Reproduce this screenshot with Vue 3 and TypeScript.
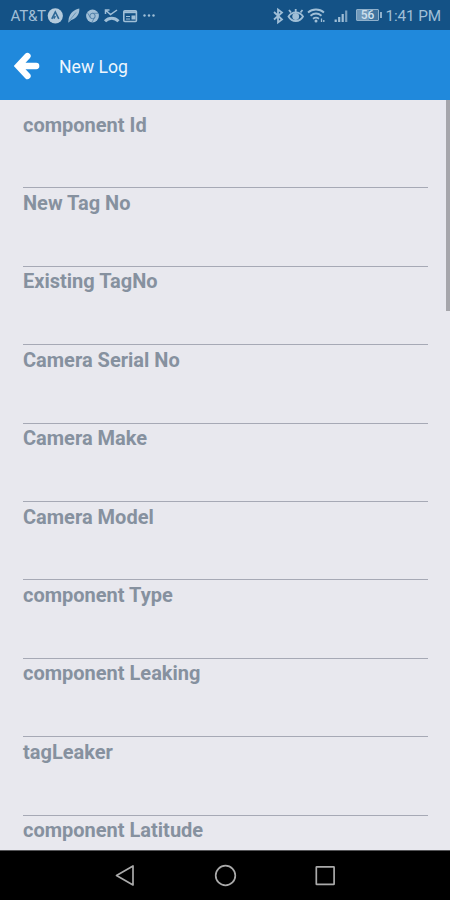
<script setup lang="ts">
import { ref } from 'vue'

const carrier = 'AT&T'
const time = '1:41 PM'
const battery = 56
const fields = ref<string[]>([
  'component Id',
  'New Tag No',
  'Existing TagNo',
  'Camera Serial No',
  'Camera Make',
  'Camera Model',
  'component Type',
  'component Leaking',
  'tagLeaker',
  'component Latitude',
])
</script>

<template>
  <div class="phone">
    <div class="status">
      <span class="carrier">{{ carrier }}</span>
      <svg class="notifications" width="110" height="30" viewBox="0 0 110 30" fill="none" stroke="#a0bfd7" stroke-width="1.6">
        <circle cx="8.3" cy="15.8" r="7.6" fill="#b4cbdd" stroke="none" />
        <path d="M4.800 18.800 8.300 12l3.500 6.800M6.800 18.600 8.300 16" stroke="#2f6896" />
        <path d="M21.200 22.800 21.800 18c1.500-5 5-8.500 10.500-9.500 .5 5-2.500 10-8 11.500z" fill="#a0bfd7" stroke="none" />
        <path d="M22.500 20.500 29 12.500" stroke="#4f82aa" stroke-width=".7" />
        <circle cx="45.500" cy="16" r="6.400" fill="#a0bfd7" stroke="none" />
        <circle cx="45.500" cy="16" r="2.700" stroke="#4f7fa8" stroke-width="1" />
        <path d="M45.500 13.300h5.500M43.200 17.400l-2.700-4.600M47.800 17.400l-2.800 4.700" stroke="#4f7fa8" stroke-width=".8" />
        <path d="M59 10.500l4.500 4L70 10M58.500 14v-4h4" stroke-width="1.500" />
        <path d="M58 21.300c4-4 9.500-4 13.500 0" stroke-width="3" />
        <rect x="76.800" y="10.700" width="12.600" height="10.800" rx="1" />
        <path d="M76.800 12.200h12.600" stroke-width="2" />
        <path d="M79 16.500h4M79 19h4" stroke-width="1" />
        <path d="M84.500 17.500h4" stroke-width="4" />
        <g fill="#a0bfd7" stroke="none"><circle cx="97.500" cy="15.500" r="1.200" /><circle cx="102" cy="15.500" r="1.200" /><circle cx="106.500" cy="15.500" r="1.200" /></g>
      </svg>
      <svg class="system" width="82" height="30" viewBox="0 0 82 30" fill="none" stroke="#a0bfd7" stroke-width="1.800">
        <path d="M1 12l8 7.500L5 22.500V9.500l4 3-8 7" />
        <path d="M15.500 16.500c3.500-5.500 11-5.500 14.500 0-3.500 6-11 6-14.500 0z" />
        <circle cx="22.700" cy="16.500" r="3.400" fill="#a0bfd7" stroke="none" />
        <path d="M22.700 12V9M18 12.500 16 10M27.500 12.500l2-2.500" />
        <path d="M35 12.500c4.500-4 11.500-4 16 0M37.500 15.700c3.500-2.800 7.500-2.800 11 0M40 18.800c2-1.600 4-1.600 6 0" />
        <circle cx="43" cy="21" r="1.500" fill="#a0bfd7" stroke="none" />
        <path d="M48.500 18.500v3.500M50.800 20v2" stroke-width="1.300" />
        <path d="M62.700 22v-2.500M66.200 22v-5M69.700 22v-8" stroke-width="2.200" />
        <path d="M73.200 22V10.500" stroke-width="2.200" stroke="#7ba1c0" />
      </svg>
      <span class="battery">{{ battery }}</span>
      <span class="time">{{ time }}</span>
    </div>

    <header class="header">
      <svg class="back" width="26" height="28" viewBox="0 0 26 28" fill="none" stroke="#fff">
        <path d="M13.500 4 4 14l9.500 10M5 14h17.200" stroke-width="6.300" stroke-linecap="round" stroke-linejoin="miter" />
      </svg>
      <h1 class="title">New Log</h1>
    </header>

    <main class="form">
      <label v-for="f in fields" :key="f" class="field">{{ f }}</label>
      <div class="scrollbar"></div>
    </main>

    <nav class="nav">
      <svg width="24" height="24" viewBox="0 0 24 24"><path d="M3.500 11.500 20 2v19z" /></svg>
      <svg width="24" height="24" viewBox="0 0 24 24"><circle cx="12.500" cy="11.500" r="9.800" /></svg>
      <svg width="24" height="24" viewBox="0 0 24 24"><rect x="3.300" y="2.800" width="17.800" height="17.600" rx=".5" /></svg>
    </nav>
  </div>
</template>

<style>
body {
  margin: 0;
  background: #e8e8ee;
}
</style>

<style scoped>
.phone {
  display: flex;
  flex-direction: column;
  width: 450px;
  height: 900px;
  overflow: hidden;
  font-family: Roboto, "Liberation Sans", sans-serif;
  background: #e8e8ee;
}
.status {
  display: flex;
  align-items: center;
  flex: none;
  box-sizing: border-box;
  height: 30px;
  padding-left: 10.500px;
  background: #145286;
  color: #a0bfd7;
  white-space: nowrap;
}
.carrier {
  width: 36.500px;
  font-size: 15.200px;
  letter-spacing: -0.300px;
  padding-top: 2px;
}
.notifications {
  flex: none;
}
.system {
  flex: none;
  margin-left: 116px;
}
.battery {
  position: relative;
  box-sizing: border-box;
  width: 23px;
  height: 12px;
  margin-left: 1px;
  border: 1px solid #8fb0cb;
  border-radius: 1px;
  background: linear-gradient(90deg, #6f98ba 56%, #3f739f 56%);
  color: #d0e1ee;
  font-size: 12px;
  font-weight: 500;
  line-height: 11px;
  text-align: center;
}
.battery::after {
  content: "";
  position: absolute;
  right: -3.500px;
  top: 2px;
  width: 2px;
  height: 6px;
  background: #8fb0cb;
}
.time {
  margin-left: 6.500px;
  padding-top: 2px;
  font-size: 15.300px;
  letter-spacing: -0.120px;
}
.header {
  display: flex;
  align-items: center;
  flex: none;
  box-sizing: border-box;
  height: 69.500px;
  padding: 3px 0 0 14px;
  background: #2089dc;
}
.title {
  margin: 1px 0 0 19px;
  color: #eef6fd;
  font-size: 17.600px;
  font-weight: 400;
}
.form {
  position: relative;
  flex: 1;
  min-height: 0;
  overflow: hidden;
  padding: 10.500px 22px 0 23px;
}
.field {
  display: block;
  box-sizing: border-box;
  height: 78.400px;
  padding-top: 3.600px;
  border-bottom: 1.500px solid #a6a9b5;
  color: #86919f;
  font-size: 20px;
  font-weight: 700;
  line-height: 22px;
}
.scrollbar {
  position: absolute;
  top: 0.500px;
  right: 0;
  width: 4.500px;
  height: 211px;
  background: #a6a6ab;
}
.nav {
  display: flex;
  align-items: center;
  justify-content: center;
  flex: none;
  gap: 76px;
  box-sizing: border-box;
  height: 50px;
  background: #000;
  border-top: 1px solid #555558;
}
.nav svg {
  fill: none;
  stroke: #aaa;
  stroke-width: 1.700;
  stroke-linejoin: round;
}
</style>
